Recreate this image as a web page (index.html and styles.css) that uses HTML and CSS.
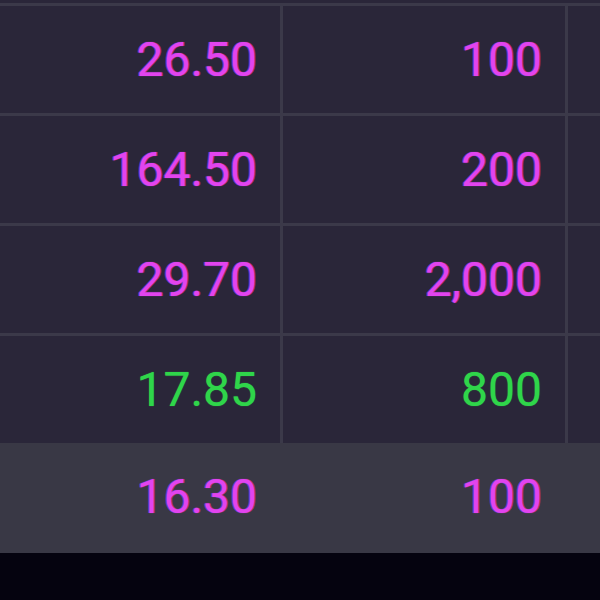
FILE: index.html
```html
<!DOCTYPE html>
<html lang="en">
<head>
<meta charset="utf-8">
<title>Trades</title>
<link rel="stylesheet" href="styles.css">
</head>
<body>
<div class="table">
  <div class="row">
    <div class="cell sell">26.50</div>
    <div class="cell sell">100</div>
    <div class="cell"></div>
  </div>
  <div class="row">
    <div class="cell sell">164.50</div>
    <div class="cell sell">200</div>
    <div class="cell"></div>
  </div>
  <div class="row">
    <div class="cell sell">29.70</div>
    <div class="cell sell">2,000</div>
    <div class="cell"></div>
  </div>
  <div class="row row-before-hl">
    <div class="cell buy">17.85</div>
    <div class="cell buy">800</div>
    <div class="cell"></div>
  </div>
  <div class="row row-hl">
    <div class="cell sell">16.30</div>
    <div class="cell sell">100</div>
    <div class="cell"></div>
  </div>
</div>
<div class="footer"></div>
</body>
</html>
```
FILE: styles.css
```css
html, body {
  margin: 0;
  padding: 0;
}

body {
  background: #2a2639;
  padding-top: 3px;
  font-family: Roboto, "Liberation Sans", sans-serif;
  overflow: hidden;
  height: 600px;
}

.table {
  border-top: 3px solid #3b3949;
}

.row {
  display: grid;
  grid-template-columns: 283px 285px 1fr;
  height: 110px;
  box-sizing: border-box;
  border-bottom: 3px solid #3b3949;
  background: #2a2639;
}

.cell {
  box-sizing: border-box;
  border-right: 3px solid #3b3949;
  padding-right: 23px;
  padding-bottom: 0;
  display: flex;
  align-items: center;
  justify-content: flex-end;
  font-size: 48px;
  line-height: 1;
}

.cell:last-child {
  border-right: none;
}

.sell {
  color: #e244ee;
  text-shadow: -1px 0 rgba(100, 70, 255, 0.6), 1px 0 rgba(255, 40, 110, 0.55), 0 0 1px rgba(226, 68, 238, 0.8);
}

.buy {
  color: #2fd54a;
  text-shadow: 0 0 1px rgba(47, 213, 74, 0.8);
}

.row-before-hl {
  border-bottom-color: #393845;
}

.row-hl {
  background: #393845;
  border-bottom: none;
  height: 107px;
}

.row-hl .cell {
  border-right-color: #393845;
  padding-bottom: 6px;
}

.footer {
  background: #05030f;
  height: 60px;
}
```
